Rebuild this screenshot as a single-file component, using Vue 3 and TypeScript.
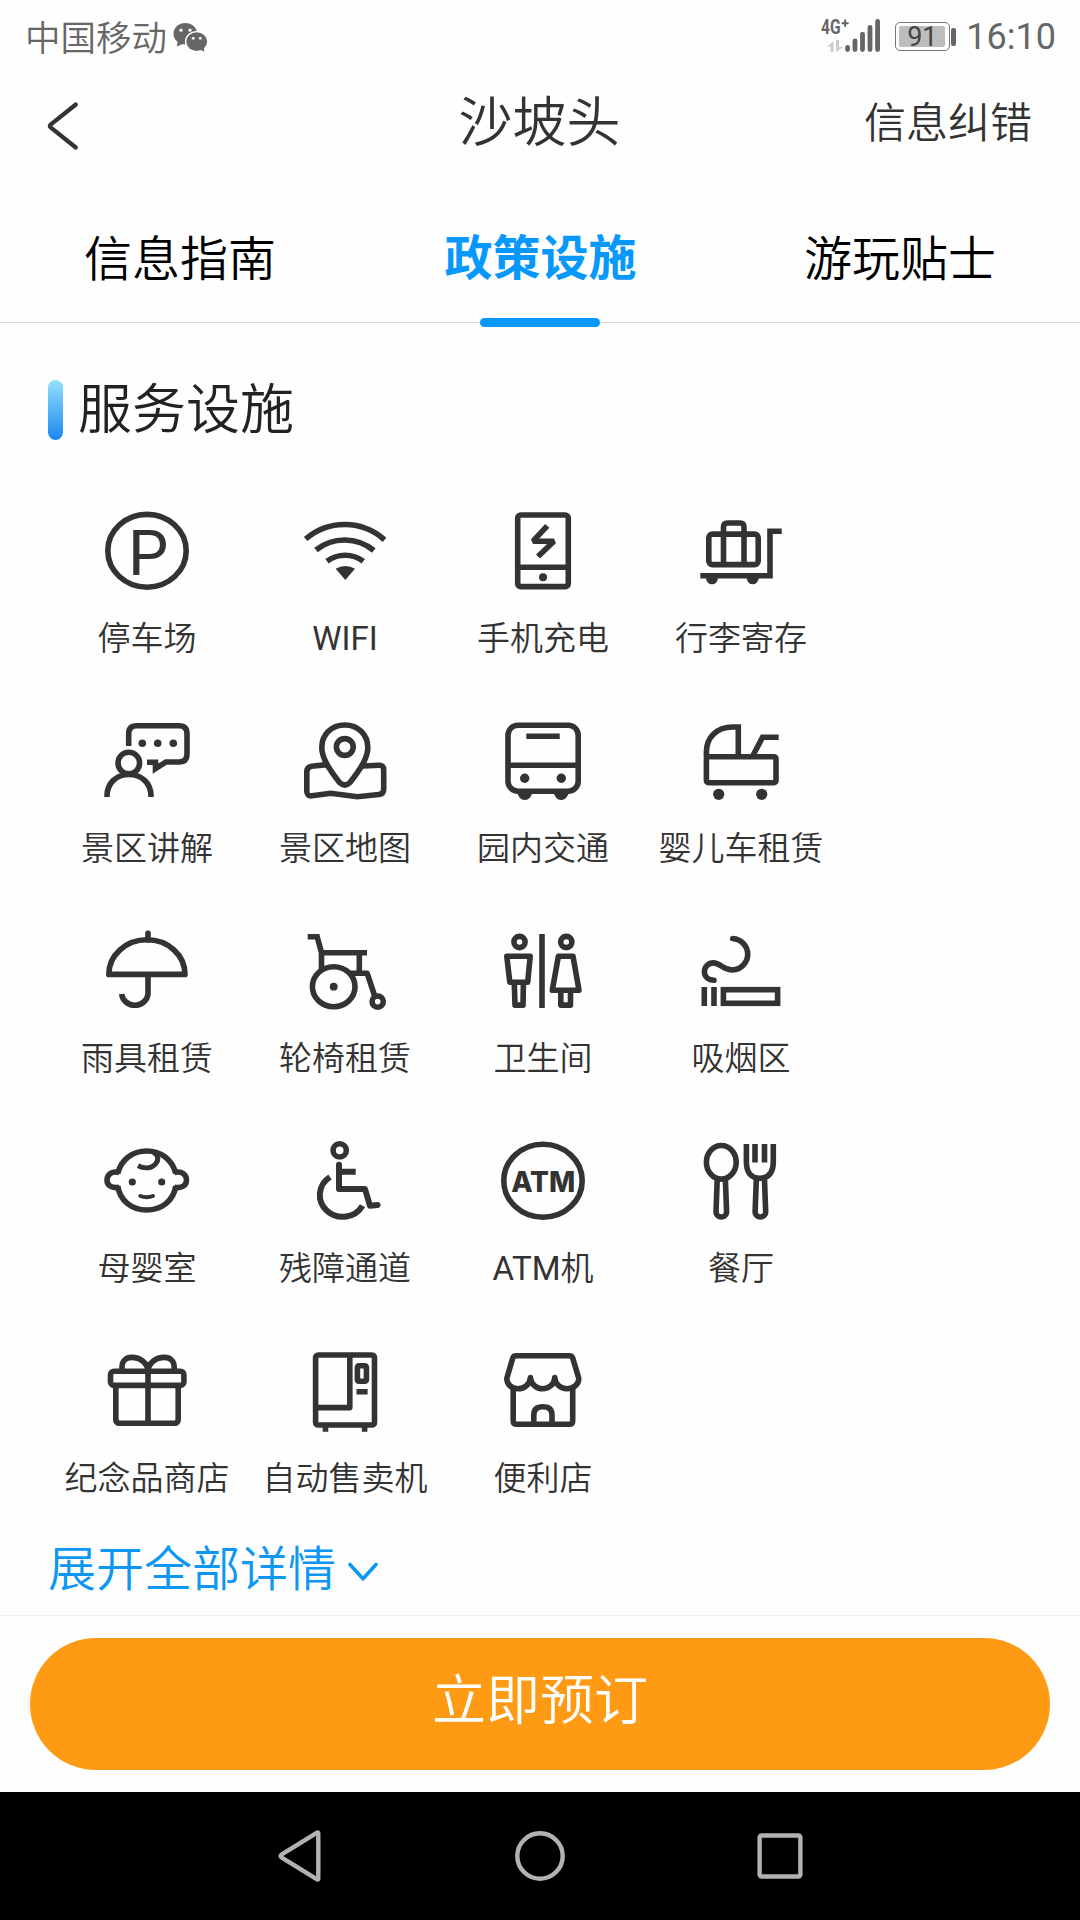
<script setup lang="ts">
interface Facility {
  label: string
  icon: string
}

const tabs: string[] = ['信息指南', '政策设施', '游玩贴士']
const activeTab = 1

const facilities: Facility[] = [
  {
    label: '停车场',
    icon: '<ellipse cx="50" cy="49.8" rx="39.2" ry="36.4"/><text x="30.6" y="73.7" font-family="Inter, sans-serif" font-size="61.5" font-weight="400" textLength="42" lengthAdjust="spacingAndGlyphs" fill="currentColor" stroke="none">P</text>',
  },
  {
    label: 'WIFI',
    icon: '<path d="M10.7 38A59.5 59.5 0 0 1 89.5 38.8M21 49A45.7 45.7 0 0 1 78.8 49.5M32 60.2A30.5 30.5 0 0 1 68.3 60.2"/><path class="solid" d="M40.7 67.8A18 18 0 0 1 60 67.8L50.3 79Z"/>',
  },
  {
    label: '手机充电',
    icon: '<rect x="24.7" y="14" width="50.6" height="71.6" rx="3"/><path d="M24.7 66.3H75.3"/><path stroke-linejoin="bevel" d="M54.3 24.8L40 40.2H61L45 55.5"/><circle class="solid" cx="50" cy="76.3" r="4"/>',
  },
  {
    label: '行李寄存',
    icon: '<rect x="17.8" y="33.1" width="49.4" height="30.5" rx="3.5"/><path d="M32.5 64V26q0-4 4-4h12.5q4 0 4 4v38M9.3 74.7H79V30.3H90.7"/><path class="solid" d="M15 77h12a6 6.3 0 0 1-12 0M55.7 77h12a6 6.3 0 0 1-12 0"/>',
  },
  {
    label: '景区讲解',
    icon: '<path d="M31.7 35V22.7q0-8 8-8H82q8 0 8 8V43q0 8-8 8H69L58.5 57.6V51.2H50"/><circle cx="31.8" cy="52" r="10.8"/><path d="M10 86v-1C10 72 19.5 63.5 32 63.5S54 72 54 85v1"/><g class="solid"><circle cx="45.3" cy="32.3" r="3.8"/><circle cx="60.7" cy="32.3" r="3.8"/><circle cx="76.3" cy="32.3" r="3.8"/></g>',
  },
  {
    label: '景区地图',
    icon: '<path d="M49.8 14C36 14 26.8 24 26.8 36.5C26.8 47 34 58 44.5 71.5Q49.8 76.5 55 71.5C65.5 58 72.8 47 72.8 36.5C72.8 24 63.5 14 49.8 14Z"/><circle cx="49.8" cy="36" r="8.4"/><path d="M32 53.6L16.5 55.3Q11.8 56 11.8 61V80Q11.8 85.5 17 84.8L35.7 82.3L62.3 85.8L84 83.5Q88.7 83 88.7 78V59Q88.7 54 84 54.2L68 55"/>',
  },
  {
    label: '园内交通',
    icon: '<rect x="15" y="14.2" width="70.2" height="66" rx="10"/><path d="M15 54.3H85M33.3 25.3H66.7"/><g class="solid"><circle cx="31.7" cy="67.3" r="4.7"/><circle cx="68.3" cy="67.3" r="4.7"/><path d="M24.6 81.5h14.4a7.2 7.4 0 0 1-14.4 0M61 81.5h14.4a7.2 7.4 0 0 1-14.4 0"/></g>',
  },
  {
    label: '婴儿车租赁',
    icon: '<rect x="15.4" y="45.7" width="69.6" height="26" rx="2"/><path d="M15.4 46V41C15.4 27 25 16 42 16H47.3V45.7M61.7 45L71.5 26.3H87.7"/><g class="solid"><circle cx="27.7" cy="83.3" r="5.6"/><circle cx="70.7" cy="83.3" r="5.6"/></g>',
  },
  {
    label: '雨具租赁',
    icon: '<path stroke-linejoin="round" d="M11.8 53.4C11.8 34 29 18.8 50 18.8S88 34 88 53.4Z"/><path stroke-linecap="round" d="M51 12.3V19"/><path d="M51 53V73a13.2 12.3 0 0 1-26.3 0"/>',
  },
  {
    label: '轮椅租赁',
    icon: '<path d="M12.7 15.7H22.2L26.5 31.7V49M24 31.7H72M64.3 31.7V52.3"/><path stroke-linejoin="round" d="M55.5 52.3H72.2L79.7 75"/><ellipse cx="38.7" cy="65.7" rx="21.3" ry="20"/><circle cx="82.7" cy="80.6" r="5.6"/><circle class="solid" cx="38.7" cy="65.7" r="3.9"/>',
  },
  {
    label: '卫生间',
    icon: '<circle cx="26.5" cy="21" r="5.6"/><circle cx="73.3" cy="21" r="5.6"/><path d="M49 13V87"/><path stroke-linejoin="round" d="M13.8 35.3H37.2L34.7 61.2H16.8ZM21.3 62L22 84.1H30L30.4 62M65.4 35.3H80L86 69.3H59.3ZM67.8 70V84.1H77.5V70"/>',
  },
  {
    label: '吸烟区',
    icon: '<path stroke-linecap="round" d="M41.7 17.5A16.3 15.8 0 0 1 41.7 49C31 49 30 41.9 22.3 41.9A9 8.7 0 0 0 13.4 50.5C13.4 56 17.5 59.3 23 59.3"/><path d="M13.3 66V85M23 66V85"/><rect x="32.4" y="68.7" width="54.2" height="13.6"/>',
  },
  {
    label: '母婴室',
    icon: '<path d="M20.7 42.5C24.2 28.5 35.5 20 49.7 20S75.2 28.5 78.8 42.5M20.7 55C23 70 35 79 49.7 79S76.5 70 78.8 55M22 41.4C14 39.8 10 44 10 49S14 57.7 22 56.3M77.5 41.4C85.5 39.8 89.5 44 89.5 49S85.5 57.7 77.5 56.3"/><path stroke-width="5" d="M54 20.2C61 22.5 62.6 28.5 58.5 33C54 37.8 47 37.8 41 34.8"/><path stroke-width="4" stroke-linecap="round" d="M43.3 65Q49.7 67.6 56 65"/><g class="solid"><circle cx="35.3" cy="51" r="3.6"/><circle cx="64.7" cy="51" r="3.6"/></g>',
  },
  {
    label: '残障通道',
    icon: '<circle cx="44.7" cy="19.4" r="6.6"/><path stroke-width="6" d="M35 46A22.8 21.7 0 1 0 67.5 74.7M44 40.7H60.7"/><path stroke-width="6" stroke-linejoin="round" stroke-linecap="round" d="M44 33.8V58H70L75 74.8L82.6 73.9"/>',
  },
  {
    label: 'ATM机',
    icon: '<ellipse cx="50" cy="49.7" rx="39.2" ry="36.5"/><text x="18.2" y="60.8" font-family="Inter, sans-serif" font-weight="800" font-size="29" textLength="64" lengthAdjust="spacingAndGlyphs" fill="currentColor" stroke="none">ATM</text>',
  },
  {
    label: '餐厅',
    icon: '<ellipse cx="30.3" cy="31.3" rx="14.9" ry="16.8"/><path d="M26.2 49L25 81a5.3 5 0 0 0 10.6 0L34.4 49M55.4 13V31C55.4 42 60.5 47.3 68.9 47.3S82.3 42 82.3 31V13M64 13V31.5M73.5 13V31.5M65.3 49L64.1 81a5.3 5 0 0 0 10.6 0L73.5 49"/>',
  },
  {
    label: '纪念品商店',
    icon: '<rect x="13.5" y="30.3" width="73.4" height="14.1" rx="3.5"/><path d="M18.8 45V78.3q0 4 4 4H77.2q4 0 4-4V45M51 29V82M25 30V26C25 20 29 16.4 34.5 16.4C43 16.4 51 22 51 30.5C51 22 59 16.4 67.5 16.4C73 16.4 77.2 20 77.2 26V30"/>',
  },
  {
    label: '自动售卖机',
    icon: '<rect x="20.6" y="14" width="58.9" height="70" rx="2.5"/><path stroke-linejoin="round" d="M54.8 14V66.6H20.7"/><rect x="62.4" y="24.8" width="9" height="15.4" rx="1.5"/><path d="M61.5 50.7H72.6M30.5 85V90.7M69.6 85V90.7"/>',
  },
  {
    label: '便利店',
    icon: '<path stroke-linejoin="round" d="M23 14.8H76.5Q79 14.8 79.8 17.3L85.7 37C86.3 43 80.5 47.7 74 47.7S62 43 61.8 36.5C61.5 43 56 47.7 49.7 47.7S37.8 43 37.4 36.5C37 43 31.5 47.7 25 47.7S13.3 43 13.9 37L19.7 17.3Q20.5 14.8 23 14.8Z"/><path d="M20.2 46V79.7q0 3.5 3.5 3.5H76.2q3.5 0 3.5-3.5V46M40.8 83V74C40.8 68.5 44 65.8 49.9 65.8S59 68.5 59 74V83"/>',
  },
]
</script>

<template>
  <div class="screen">
    <div class="status">
      <span class="carrier">中国移动</span>
      <svg class="wechat" width="36" height="30" viewBox="0 0 36 30">
        <g fill="#666">
          <ellipse cx="12.3" cy="11.7" rx="11.8" ry="10.8" />
          <path d="M5 18L3.8 24.5L12 21Z" />
        </g>
        <ellipse cx="23.7" cy="19.6" rx="11.8" ry="10.6" fill="#fff" />
        <ellipse cx="23.7" cy="19.6" rx="10.4" ry="9.3" fill="#666" />
        <path d="M26 27L31.5 29.8L30.5 25Z" fill="#666" />
        <g fill="#fff">
          <circle cx="8" cy="8.2" r="1.6" />
          <circle cx="17" cy="8.2" r="1.6" />
          <circle cx="20.2" cy="16.3" r="1.4" />
          <circle cx="27.3" cy="16.3" r="1.4" />
        </g>
      </svg>
      <div class="spacer"></div>
      <svg class="signal" width="62" height="46" viewBox="0 -10 62 46">
        <text x="1" y="16.8" font-family="Roboto, sans-serif" font-weight="700" font-size="20.5" textLength="19.5" lengthAdjust="spacingAndGlyphs" fill="#666">4G</text>
        <path d="M21.5 6.2H28.7M25.1 2.6V9.8" stroke="#666" stroke-width="2" />
        <path d="M13.6 35V24.5L7 29.5H10.6V35ZM16 23V35L23.2 30H19V23Z" fill="#ccc" />
        <g stroke="#666" stroke-width="4.8" stroke-linecap="round">
          <path d="M27.6 30.5V32.6M35 23.8V32.6M42.5 17.2V32.6M50 10.5V32.6M57.6 4.3V32.6" />
        </g>
      </svg>
      <div class="battery"><div class="charge">91</div></div>
      <div class="nub"></div>
      <span class="clock">16:10</span>
    </div>

    <header class="header">
      <svg class="back" width="36" height="52" viewBox="0 0 36 52">
        <path d="M30.8 4.5L5.6 24.6Q4 26 5.6 27.4L30.8 47.5" fill="none" stroke="#333" stroke-width="4.2" stroke-linecap="round" stroke-linejoin="round" />
      </svg>
      <h1>沙坡头</h1>
      <span class="report">信息纠错</span>
    </header>

    <nav class="tabs">
      <div v-for="(tab, i) in tabs" :key="tab" class="tab" :class="{ active: i === activeTab }">{{ tab }}</div>
    </nav>

    <main class="content">
      <div class="section">
        <span class="mark"></span>
        <h2>服务设施</h2>
      </div>
      <div class="grid">
        <div v-for="item in facilities" :key="item.label" class="cell">
          <svg class="icon" width="100" height="100" viewBox="0 0 100 100" v-html="item.icon"></svg>
          <span class="label">{{ item.label }}</span>
        </div>
      </div>
      <div class="more">
        <span>展开全部详情</span>
        <svg width="30" height="20" viewBox="0 0 30 20">
          <path d="M2 2.5L15 16.8L28 2.5" fill="none" stroke="#0b97f3" stroke-width="3.6" stroke-linecap="round" stroke-linejoin="round" />
        </svg>
      </div>
    </main>

    <footer class="footer">
      <button class="book">立即预订</button>
    </footer>

    <div class="navbar">
      <svg width="50" height="54" viewBox="0 0 50 54">
        <path d="M43.3 4.2V49.8Q43.3 51 42.1 50.3L6.4 28.3Q4.8 27 6.4 25.7L42.1 3.7Q43.3 3 43.3 4.2Z" />
      </svg>
      <svg width="54" height="54" viewBox="0 0 54 54"><circle cx="27" cy="27" r="22.7" /></svg>
      <svg width="50" height="54" viewBox="0 0 50 54"><rect x="4.6" y="6.5" width="40.8" height="41" rx="2" /></svg>
    </div>
  </div>
</template>

<style>
body {
  background: #fff;
}
</style>

<style scoped>
.screen {
  width: 1080px;
  height: 1920px;
  display: flex;
  flex-direction: column;
  overflow: hidden;
  background: #fefefe;
  color: #333;
  font-family: "Noto Sans CJK SC", sans-serif;
  font-weight: 350;
}
h1,
h2 {
  margin: 0;
  font-weight: inherit;
}
.status {
  height: 72px;
  flex: none;
  display: flex;
  align-items: flex-start;
  padding: 0 24px 0 25px;
  box-sizing: border-box;
  color: #666;
}
.carrier {
  font-size: 35.5px;
  line-height: 72px;
}
.wechat {
  margin: 22px 0 0 6px;
}
.spacer {
  flex: 1;
}
.signal {
  margin: 7px 13px 0 0;
}
.battery {
  width: 55px;
  height: 29px;
  margin-top: 22px;
  padding: 3px;
  box-sizing: border-box;
  border: 1.6px solid #777;
  border-radius: 5px;
}
.charge {
  width: 46px;
  height: 21px;
  border-radius: 2px;
  background: #bdbdbd;
  color: #444;
  font: 27px/22px Roboto, sans-serif;
  text-align: center;
}
.nub {
  width: 5px;
  height: 18px;
  margin: 28px 10px 0 1px;
  border-radius: 2px;
  background: #666;
}
.clock {
  font: 36px/75px Roboto, sans-serif;
}
.header {
  height: 110px;
  flex: none;
  display: grid;
  grid-template-columns: 1fr auto 1fr;
  align-items: start;
  padding: 0 48px 0 45px;
}
.back {
  margin-top: 28px;
}
h1 {
  font-size: 54px;
  line-height: 94px;
  padding-left: 2px;
}
.report {
  justify-self: end;
  font-size: 42px;
  line-height: 96px;
}
.tabs {
  height: 141px;
  flex: none;
  box-sizing: border-box;
  display: flex;
  border-bottom: 1px solid #d9d9d9;
}
.tab {
  flex: 1;
  position: relative;
  padding-top: 18px;
  font-size: 48px;
  line-height: 110px;
  height: 141px;
  box-sizing: border-box;
  text-align: center;
  color: #000;
}
.tab.active {
  text-indent: 1px;
  line-height: 108px;
  color: #0698fb;
  font-weight: 700;
}
.tab.active::after {
  content: "";
  position: absolute;
  left: 120px;
  bottom: -4px;
  width: 120px;
  height: 9px;
  border-radius: 5px;
  background: #0698fb;
}
.content {
  height: 1292px;
  flex: none;
}
.section {
  display: flex;
  align-items: center;
  height: 60px;
  margin: 57px 0 0 48px;
  color: #222;
}
.mark {
  width: 15px;
  height: 60px;
  margin-right: 15px;
  border-radius: 8px;
  background: linear-gradient(#93e0fd, #1b87f0);
}
h2 {
  font-size: 54px;
  line-height: 54px;
  margin-top: -9px;
}
.grid {
  display: grid;
  grid-template-columns: repeat(4, 198px);
  grid-auto-rows: 210px;
  margin: 61px 0 0 48px;
}
.cell {
  display: flex;
  flex-direction: column;
  align-items: center;
}
.icon {
  flex: none;
  fill: none;
  stroke: currentColor;
  stroke-width: 5.6;
}
.icon :deep(.solid) {
  fill: currentColor;
  stroke: none;
}
.label {
  height: 48px;
  margin-top: 14px;
  font-family: Roboto, "Noto Sans CJK SC DemiLight", "Noto Sans CJK SC", sans-serif;
  font-weight: 400;
  font-size: 33px;
  line-height: 48px;
  white-space: nowrap;
}
.more {
  display: flex;
  align-items: center;
  height: 60px;
  margin: -16px 0 0 48px;
  font-size: 48px;
  line-height: 60px;
  color: #0b97f3;
}
.more svg {
  margin: 13px 0 0 12px;
}
.footer {
  height: 177px;
  flex: none;
  box-sizing: border-box;
  padding: 22px 30px;
  border-top: 1px solid #f1f1f1;
}
.book {
  width: 1020px;
  height: 132px;
  display: block;
  border: 0;
  border-radius: 66px;
  padding: 0 0 15px;
  background: #ff9a15;
  color: #fff;
  font: 350 54px/117px "Noto Sans CJK SC", sans-serif;
}
.navbar {
  height: 128px;
  flex: none;
  display: flex;
  justify-content: center;
  gap: 188px;
  align-items: center;
  background: #000;
}
.navbar svg {
  fill: none;
  stroke: #b2b2b2;
  stroke-width: 4.4;
  stroke-linejoin: round;
}
</style>
